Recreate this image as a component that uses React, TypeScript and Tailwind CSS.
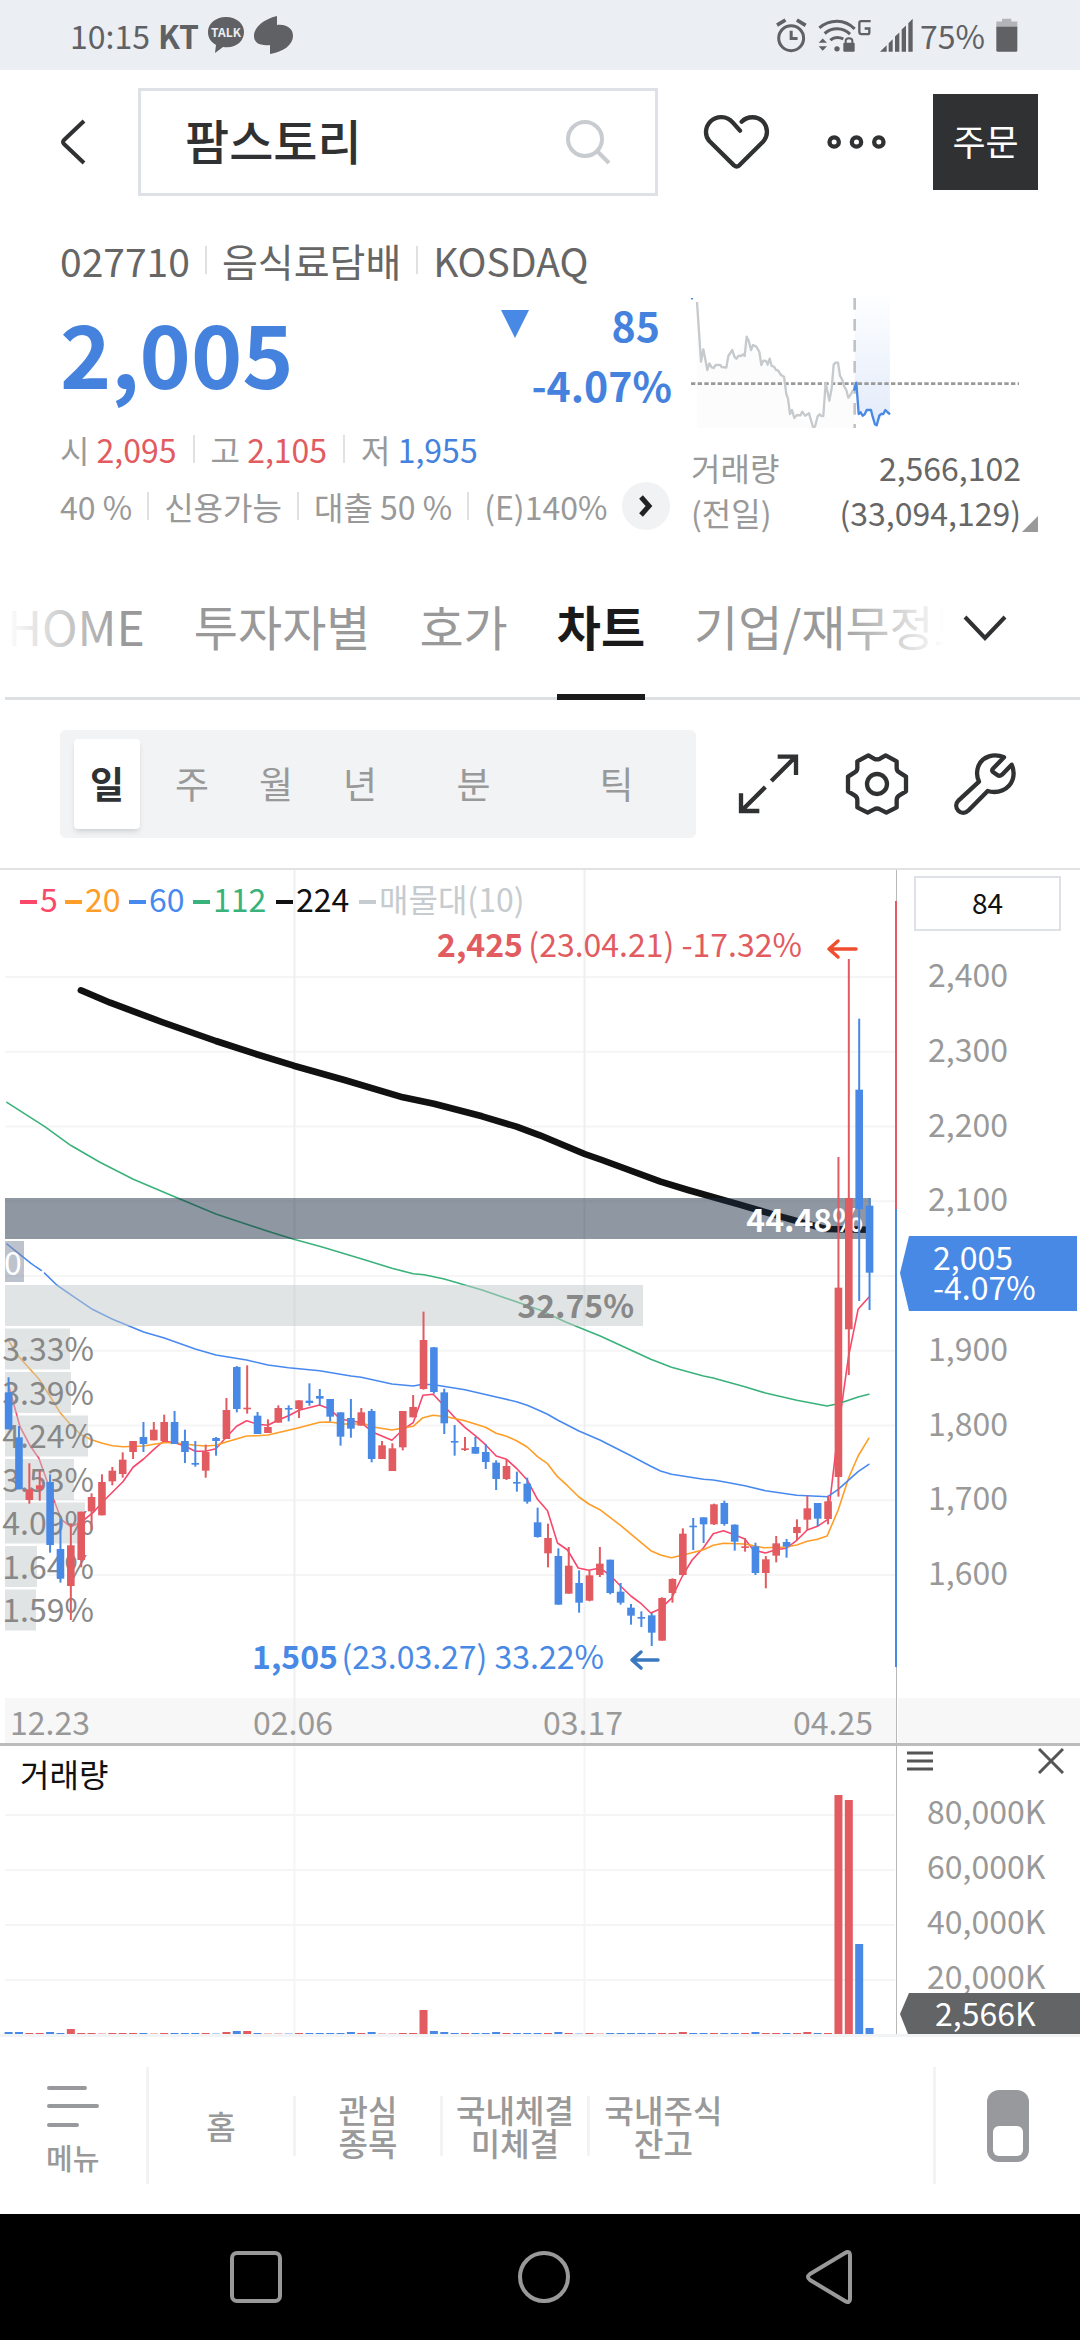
import React from "react";

/* ---------- chart data ---------- */

// Half a chart panel is 1568 units wide; prices are stored in thirds of a pixel below y = 1290.
const PANEL = 1568;
const px = (u: number) => u / 2.904;
const py = (u: number) => 1290 + u / 3;

type Candle = ["r" | "b", number, number, number, number]; // direction, high, body top, body bottom, low

const CANDLES: Candle[] = [
  ["b", 262, 307, 418, 418], ["b", 408, 442, 598, 598], ["r", 520, 598, 630, 641], ["r", 541, 586, 598, 632],
  ["b", 553, 576, 765, 788], ["b", 686, 777, 866, 878], ["r", 700, 766, 888, 990], ["r", 665, 665, 810, 832],
  ["r", 610, 621, 664, 720], ["r", 553, 576, 676, 676], ["r", 531, 542, 574, 586], ["r", 487, 509, 552, 563],
  ["r", 453, 453, 486, 507], ["b", 396, 441, 462, 486], ["r", 396, 419, 451, 451], ["r", 374, 396, 453, 453],
  ["b", 363, 396, 462, 462], ["b", 419, 453, 486, 519], ["b", 453, 519, 524, 530], ["r", 464, 486, 542, 563],
  ["b", 441, 444, 453, 497], ["r", 324, 360, 447, 447], ["b", 228, 231, 357, 367], ["r", 226, 353, 357, 371],
  ["b", 366, 377, 432, 432], ["r", 388, 411, 429, 429], ["r", 346, 354, 398, 398], ["b", 346, 354, 358, 394],
  ["r", 331, 331, 357, 384], ["b", 280, 332, 339, 347], ["b", 297, 318, 326, 346], ["b", 327, 327, 380, 394],
  ["b", 367, 367, 440, 467], ["b", 327, 384, 416, 443], ["r", 354, 367, 407, 407], ["b", 357, 363, 507, 517],
  ["r", 453, 466, 507, 507], ["r", 460, 475, 543, 543], ["r", 363, 363, 472, 481], ["r", 315, 351, 382, 382],
  ["r", 65, 150, 297, 299], ["b", 171, 172, 306, 311], ["b", 296, 307, 400, 432], ["b", 405, 453, 457, 497],
  ["r", 441, 475, 480, 483], ["b", 441, 471, 491, 491], ["b", 462, 486, 516, 537], ["b", 511, 518, 567, 600],
  ["r", 509, 528, 567, 570], ["b", 545, 576, 580, 605], ["b", 563, 581, 635, 641], ["b", 653, 697, 741, 743],
  ["r", 701, 744, 790, 832], ["b", 775, 798, 944, 944], ["r", 771, 827, 911, 911], ["b", 841, 879, 938, 968],
  ["r", 841, 856, 932, 934], ["r", 771, 821, 855, 861], ["b", 809, 809, 909, 913], ["b", 879, 905, 938, 944],
  ["b", 942, 953, 977, 1004], ["b", 964, 981, 986, 1011], ["b", 969, 976, 1028, 1068], ["r", 922, 924, 1052, 1052],
  ["r", 865, 867, 909, 938], ["r", 715, 731, 855, 857], ["b", 684, 707, 710, 780], ["b", 682, 682, 703, 759],
  ["r", 641, 643, 703, 705], ["b", 632, 639, 702, 707], ["b", 703, 704, 755, 782], ["r", 744, 769, 774, 785],
  ["b", 758, 769, 849, 855], ["r", 798, 808, 849, 895], ["r", 738, 760, 797, 817], ["b", 747, 756, 770, 803],
  ["r", 688, 711, 729, 751], ["r", 617, 655, 689, 720], ["b", 639, 639, 686, 708], ["r", 617, 634, 687, 703],
  ["r", -399, -7, 561, 620], ["r", -993, -276, 118, 255], ["b", -814, -601, -243, 33], ["b", -276, -253, -52, 60],
];

const candleX = (i: number) => 8.6 + i * 10.373;
const RED = "#e15b60";
const BLUE = "#4889e6";
const color = (d: string) => (d === "r" ? RED : BLUE);

// Moving averages: points of the left half, then points of the right half.
const MA5 = [
  [25, 285, 38, 335, 58, 410, 88, 468, 113, 505, 132, 560, 160, 640, 178, 688, 206, 711, 240, 693, 270, 668, 297, 637, 357, 575, 387, 531, 417, 507, 447, 478, 475, 453, 507, 458, 537, 468, 567, 484, 597, 484, 627, 476, 657, 442, 687, 409, 716, 392, 748, 403, 778, 406, 808, 390, 838, 377, 868, 361, 928, 345, 958, 357, 989, 388, 1019, 392, 1049, 398, 1070, 416, 1090, 430, 1138, 451, 1169, 420, 1200, 398, 1228, 316, 1258, 313, 1290, 348, 1320, 382, 1350, 412, 1380, 437, 1410, 464, 1441, 498, 1471, 508, 1500, 535, 1531, 570, 1561, 628],
  [22, 662, 51, 759, 80, 780, 111, 834, 142, 841, 174, 834, 204, 856, 234, 888, 264, 918, 294, 941, 322, 969, 350, 956, 382, 925, 415, 855, 442, 810, 475, 773, 503, 731, 533, 722, 565, 734, 595, 747, 620, 780, 655, 789, 685, 779, 715, 775, 746, 751, 776, 720, 806, 709, 836, 688, 866, 420, 896, 200, 924, 58, 955, 22],
];
const MA20 = [
  [25, 152, 55, 200, 113, 267, 146, 320, 176, 370, 206, 405, 236, 435, 266, 449, 297, 460, 327, 467, 357, 470, 417, 468, 447, 463, 477, 458, 507, 458, 567, 466, 597, 468, 627, 466, 657, 456, 716, 438, 748, 437, 778, 435, 828, 423, 868, 413, 928, 397, 958, 396, 1000, 402, 1060, 402, 1079, 410, 1138, 420, 1200, 409, 1228, 383, 1258, 376, 1300, 381, 1350, 392, 1410, 412, 1441, 430, 1471, 439, 1500, 452, 1531, 471, 1561, 500],
  [22, 521, 51, 560, 80, 587, 113, 621, 142, 642, 174, 659, 234, 706, 322, 782, 352, 796, 382, 803, 442, 788, 475, 779, 503, 766, 533, 760, 595, 762, 650, 773, 715, 771, 746, 765, 776, 754, 806, 748, 834, 738, 866, 660, 896, 565, 924, 498, 955, 445],
];
const MA60 = [
  [20, -138, 90, -80, 125, -55, 165, -15, 205, 14, 265, 56, 327, 88, 417, 126, 477, 144, 567, 177, 627, 195, 716, 210, 778, 225, 838, 233, 928, 242, 1019, 258, 1049, 262, 1138, 282, 1200, 288, 1228, 283, 1260, 284, 1350, 299, 1441, 321, 1500, 335, 1531, 346],
  [0, 362, 22, 373, 51, 390, 113, 423, 174, 450, 264, 497, 322, 529, 350, 543, 382, 553, 475, 568, 503, 570, 533, 575, 595, 587, 655, 602, 746, 616, 806, 619, 836, 620, 866, 598, 924, 545, 955, 523],
];
const MA112 = [
  [20, -563, 130, -490, 205, -434, 290, -383, 387, -332, 500, -283, 627, -228, 778, -176, 853, -152, 928, -131, 1049, -94, 1138, -65, 1200, -49, 1232, -46, 1290, -33, 1400, 0],
  [0, 60, 73, 95, 130, 119, 175, 138, 322, 208, 382, 232, 475, 258, 503, 264, 595, 290, 655, 309, 746, 331, 834, 348, 866, 341, 924, 321, 955, 313],
];
const MA224 = [
  [235, -899, 320, -862, 470, -804, 627, -747, 740, -709, 853, -673, 1000, -630, 1170, -578, 1260, -559, 1400, -521, 1500, -490],
  [0, -464, 130, -408, 180, -390, 350, -325, 430, -300, 580, -256, 700, -220, 830, -183, 957, -181],
];

function toPoints([left, right]: number[][]) {
  const out: string[] = [];
  [left, right].forEach((half, h) => {
    for (let i = 0; i < half.length; i += 2) {
      out.push(`${px(half[i] + h * PANEL).toFixed(1)},${py(half[i + 1]).toFixed(1)}`);
    }
  });
  return out.join(" ");
}

const PROFILE = [
  { w: 65, label: "3.33%" }, { w: 66, label: "3.39%" }, { w: 83, label: "4.24%" }, { w: 69, label: "3.53%" },
  { w: 80, label: "4.09%" }, { w: 32, label: "1.64%" }, { w: 31, label: "1.59%" },
];

const LEGEND = [
  { x: 20, label: "5", c: "#fb4868" }, { x: 65, label: "20", c: "#ff9d26" }, { x: 129, label: "60", c: "#4889f0" },
  { x: 193, label: "112", c: "#3ab27b" }, { x: 276, label: "224", c: "#111111" }, { x: 359, label: "매물대(10)", c: "#c5cbce" },
];

const PRICES = ["2,400", "2,300", "2,200", "2,100", "2,000", "1,900", "1,800", "1,700", "1,600"];
const priceY = (i: number) => 977 + i * 74.75;

// Heights of the volume bars.
const VOLUMES = [
  2, 2, 1, 1, 2, 1, 5, 1, 1, 0, 1, 1, 1, 1, 0, 1, 1, 1, 1, 1, 0, 2, 3, 3, 1, 0, 0, 0, 1, 1, 1, 1, 1, 2, 1, 2, 0, 0, 1, 1, 24,
  3, 2, 1, 1, 1, 1, 2, 1, 1, 1, 1, 1, 2, 1, 0, 1, 0, 1, 1, 1, 1, 1, 1, 1, 2, 1, 1, 1, 1, 1, 1, 2, 1, 1, 1, 1, 2, 1, 1,
  239, 234, 90, 6,
];

/* ---------- charts ---------- */

function Line({ data, c, w }: { data: number[][]; c: string; w: number }) {
  return <polyline points={toPoints(data)} fill="none" stroke={c} strokeWidth={w} strokeLinejoin="round" strokeLinecap="round" />;
}

function PriceChart() {
  return (
    <svg viewBox="0 870 897 873" className="block h-auto w-full text-[32px]" role="img" aria-label="일봉 차트">
      <rect x="5" y="1698" width="892" height="45" fill="#f7f7f7" />
      <g stroke="#f5f5f6" strokeWidth="2">
        {PRICES.map((p, i) => <line key={p} x1="5" x2="895" y1={priceY(i)} y2={priceY(i)} />)}
        <line x1="294.5" x2="294.5" y1="870" y2="1743" stroke="#efeff0" />
        <line x1="584.5" x2="584.5" y1="870" y2="1743" stroke="#efeff0" />
      </g>

      <Line data={MA5} c="#f8476b" w={1.6} />
      <Line data={MA20} c="#ff9d26" w={1.6} />
      <Line data={MA60} c="#4889f0" w={1.6} />
      <Line data={MA112} c="#3ab27b" w={1.6} />
      <Line data={MA224} c="#111111" w={6.6} />

      <rect x="5" y="1198" width="866" height="41" fill="#192b41" opacity=".49" />
      <rect x="5" y="1241" width="19" height="41" fill="#7a879c" opacity=".5" />
      <rect x="5" y="1285" width="638" height="41" fill="#c3c9c9" opacity=".5" />
      {PROFILE.map((b, i) => (
        <rect key={b.label} x="5" y={1328.5 + i * 43.5} width={b.w} height="41" fill="#c3c9c9" opacity=".5" />
      ))}
      <text x="863" y="1232" textAnchor="end" fill="#fff" className="font-bold">44.48%</text>
      <text x="4" y="1275" fill="#fff">0.96%</text>
      <text x="634" y="1318" textAnchor="end" fill="#888" className="font-bold">32.75%</text>
      {PROFILE.map((b, i) => (
        <text key={b.label} x="94" y={1361 + i * 43.5} textAnchor="end" fill="#888">{b.label}</text>
      ))}

      {CANDLES.map(([d, hi, top, bot, lo], i) => (
        <g key={i} fill={color(d)}>
          <rect x={candleX(i) - 1} y={py(hi)} width="2" height={(lo - hi) / 3} />
          <rect x={candleX(i) - 3.8} y={py(top)} width="7.6" height={Math.max(1.6, (bot - top) / 3)} />
        </g>
      ))}

      {LEGEND.map((l) => (
        <g key={l.label} fill={l.c}>
          <rect x={l.x} y="900" width="17" height="4" />
          <text x={l.x + 20} y="912">{l.label}</text>
        </g>
      ))}

      <text x="437" y="957" fill={RED} className="font-bold">2,425</text>
      <text x="802" y="957" textAnchor="end" fill={RED}>(23.04.21) -17.32%</text>
      <path d="M856 949H829M838 941L829 949L838 957" fill="none" stroke="#f04f2f" strokeWidth="3.5" strokeLinecap="round" strokeLinejoin="round" />
      <text x="252" y="1669" fill={BLUE} className="font-bold">1,505</text>
      <text x="604" y="1669" textAnchor="end" fill={BLUE}>(23.03.27) 33.22%</text>
      <path d="M658 1660H632M641 1652L632 1660L641 1668" fill="none" stroke="#3a78c0" strokeWidth="3.5" strokeLinecap="round" strokeLinejoin="round" />

      <g fill="#999">
        <text x="10" y="1735">12.23</text>
        <text x="293" y="1735" textAnchor="middle">02.06</text>
        <text x="583" y="1735" textAnchor="middle">03.17</text>
        <text x="873" y="1735" textAnchor="end">04.25</text>
      </g>
      <rect x="896" y="870" width="2" height="873" fill="#b8b8b8" />
      <rect x="895" y="901" width="2" height="308" fill={RED} />
      <rect x="895" y="1209" width="2" height="458" fill={BLUE} />
    </svg>
  );
}

function PriceAxis() {
  return (
    <svg viewBox="897 931 183 812" className="block h-auto w-full text-[32px]" role="img" aria-label="가격 축">
      <rect x="898" y="1698" width="182" height="45" fill="#f7f7f7" />
      {PRICES.map((p, i) => p !== "2,000" && (
        <text key={p} x="928" y={priceY(i) + 10} fill="#999">{p}</text>
      ))}
      <path d="M900 1273L909 1236H1077V1311H909Z" fill={BLUE} />
      <text x="933" y="1270" fill="#fff">2,005</text>
      <text x="933" y="1300" fill="#fff">-4.07%</text>
    </svg>
  );
}

function VolumeChart() {
  return (
    <svg viewBox="0 1746 897 288" className="block h-auto w-full text-[32px]" role="img" aria-label="거래량 차트">
      <g stroke="#f5f5f6" strokeWidth="2">
        {[1815, 1870, 1925, 1980].map((y) => <line key={y} x1="5" x2="895" y1={y} y2={y} />)}
        <line x1="294.5" x2="294.5" y1="1746" y2="2034" />
        <line x1="584.5" x2="584.5" y1="1746" y2="2034" />
      </g>
      {VOLUMES.map((v, i) => (
        <rect key={i} x={candleX(i) - 4} y={2034 - Math.max(v, 0.4)} width="8" height={Math.max(v, 0.4)} fill={color(CANDLES[i][0])} />
      ))}
      <text x="20" y="1787" fill="#111">거래량</text>
      <rect x="896" y="1746" width="2" height="288" fill="#b8b8b8" />
    </svg>
  );
}

function VolumeAxis() {
  return (
    <svg viewBox="897 1780 183 254" className="block h-auto w-full text-[32px]" role="img" aria-label="거래량 축">
      {["80,000K", "60,000K", "40,000K", "20,000K"].map((v, i) => (
        <text key={v} x="927" y={1824 + i * 55} fill="#999">{v}</text>
      ))}
      <path d="M900 2014L909 1993H1080V2034H908Z" fill="#636466" />
      <text x="935" y="2026" fill="#fff">2,566K</text>
    </svg>
  );
}

function MiniChart() {
  return (
    <svg viewBox="30 624 984 390" className="block h-[130px] w-[328px]" role="img" aria-label="당일 시세">
      <defs>
        <linearGradient id="today" x1="0" x2="0" y1="0" y2="1">
          <stop offset="0" stopColor="#fdfeff" />
          <stop offset="1" stopColor="#e3ebfa" />
        </linearGradient>
      </defs>
      <path d="M48 640L60 812 80 836 140 830 160 800 197 740 240 820 270 825 310 860 330 970 400 1010 430 975 450 900 468 820 500 920 521 880V1014H48Z" fill="#fcfcfd" />
      <path d="M521 624H627V970L612 962 587 1003 570 960 533 970 521 880Z" fill="url(#today)" />
      <path d="M30 626H36" stroke={BLUE} strokeWidth="5" />
      <path d="M30 881H1014" stroke="#999" strokeWidth="8" strokeDasharray="13 7" />
      <path d="M521 624V1014" stroke="#bfc4c8" strokeWidth="8" strokeDasharray="35 28" />
      <path d="M48 636L60 815 67 778 79 840 85 820 92 832 98 834 104 825 118 825 122 831 136 833 142 798 154 780 160 800 166 806 173 797 180 798 186 793 191 798 197 740 203 752 210 780 216 765 226 770 235 786 241 825 247 812 255 813 260 824 266 806 272 828 279 830 285 840 291 841 300 855 309 860 316 912 321 926 327 972 333 960 340 984 348 975 358 976 364 965 372 977 384 970 396 1011 402 1010 410 979 416 973 421 978 427 978 434 878 445 932 452 895 458 824 464 818 471 818 477 857 484 870 489 888 496 900 502 923 508 916 515 902 521 900" fill="none" stroke="#c6cacd" strokeWidth="7" strokeLinejoin="round" />
      <path d="M519 902L526 878 533 972 539 967 545 977 551 973 557 960 570 960 575 980 582 1003 587 1006 595 977 600 972 607 972 613 960 619 966 627 973" fill="none" stroke={BLUE} strokeWidth="7" strokeLinejoin="round" />
    </svg>
  );
}

/* ---------- icons ---------- */

const INK = "#2f3133";

function AlarmIcon() {
  return (
    <svg viewBox="28 28 92 104" className="h-[35px] w-[31px]" fill="none" stroke="#5f6164">
      <circle cx="73" cy="88" r="37" strokeWidth="9" />
      <path d="M73 66V89H92" strokeWidth="9" />
      <path d="M31 49L56 34M90 34L116 50" strokeWidth="11" />
    </svg>
  );
}

function WifiIcon() {
  return (
    <svg viewBox="160 28 162 104" className="ml-1 h-[35px] w-[54px]" fill="none" stroke="#5f6164">
      <path d="M164 57C196 30 240 30 270 60" strokeWidth="9" />
      <path d="M180 74C202 55 234 55 256 76" strokeWidth="9" />
      <path d="M197 94C208 84 222 84 236 90" strokeWidth="9" />
      <circle cx="217" cy="120" r="8" fill="#5f6164" stroke="none" />
      <path d="M162 102L174 89 187 102ZM162 112H187L174 126Z" fill="#5f6164" stroke="none" />
      <rect x="236" y="102" width="34" height="27" rx="3" fill="#5f6164" stroke="none" />
      <path d="M243 103V96C243 86 263 86 263 96V103" strokeWidth="6" />
      <path d="M318 37H290Q284 37 284 43V69Q284 76 291 76H308Q314 76 314 70V59H300" strokeWidth="7" />
    </svg>
  );
}

function SignalIcon() {
  return (
    <svg viewBox="340 28 102 104" className="h-[35px] w-[34px]" fill="#5f6164">
      <path d="M343 129L363 109V129ZM369 103L381 91V129H369ZM388 83L401 71V129H388ZM408 62L421 50V129H408ZM428 43L441 30V129H428Z" />
    </svg>
  );
}

function BatteryIcon() {
  return (
    <svg viewBox="692 28 66 104" className="ml-1 h-[35px] w-[22px]">
      <path d="M693 38H710V30H738V38H756V56H693Z" fill="#b2b4b7" />
      <path d="M693 54H756V124Q756 129 751 129H698Q693 129 693 124Z" fill="#5f6164" />
    </svg>
  );
}

function HeartIcon() {
  return (
    <svg viewBox="62 66 207 174" className="h-[58px] w-[69px]" fill="none" stroke={INK} strokeWidth="13" strokeLinecap="round" strokeLinejoin="round">
      <path d="M176 119L154 94C137 74 106 73 88 91C70 109 70 134 84 150L158 223Q166 230 174 223L245 152C261 135 261 109 244 91C228 75 199 74 181 92" />
    </svg>
  );
}

function MoreIcon() {
  return (
    <svg viewBox="436 130 182 48" className="h-4 w-[61px]" fill="none" stroke={INK} strokeWidth="13">
      <circle cx="460" cy="154" r="14" />
      <circle cx="527" cy="154" r="14" />
      <circle cx="594" cy="154" r="14" />
    </svg>
  );
}

function ExpandIcon() {
  return (
    <svg viewBox="140 36 192 192" className="size-16" fill="none" stroke={INK} strokeWidth="13">
      <path d="M243 123L314 52M262 50H317V105M225 141L155 211M152 160V213H207" />
    </svg>
  );
}

function GearIcon() {
  return (
    <svg viewBox="462 36 192 192" className="size-16" fill="none" stroke={INK} strokeWidth="13" strokeLinejoin="round">
      <path d="M532 46L549 56Q558 60 567 56L584 46L617 64V84Q617 93 625 97L645 110V154L625 166Q617 171 617 180V202L586 218L567 208Q558 203 549 208L530 218L499 202V180Q499 171 491 166L471 154V110L491 97Q499 93 499 84V64Z" />
      <circle cx="558" cy="132" r="30" />
    </svg>
  );
}

function WrenchIcon() {
  return (
    <svg viewBox="788 36 192 192" className="size-16" fill="none" stroke={INK} strokeWidth="13" strokeLinejoin="round">
      <path d="M941 52C912 39 876 48 864 79C858 95 860 112 866 125L805 181C796 190 795 203 804 212C813 221 826 220 835 211L892 153C922 162 957 149 967 118C972 102 970 87 964 74L935 104Q928 110 921 105L908 96Q903 91 909 85Z" />
    </svg>
  );
}

/* ---------- page ---------- */

function Sep() {
  return <span className="h-7 w-0.5 shrink-0 bg-[#dfe2e5]" />;
}

function StatusBar() {
  return (
    <div className="flex h-[70px] items-center justify-between bg-[#ebeef3] pr-[62px] pl-[70px] text-[32px] text-[#5f6164]">
      <div className="flex items-center gap-2">
        <span>10:15</span>
        <span className="font-bold">KT</span>
        <svg viewBox="0 0 38 36" className="h-9 w-[38px]" fill="#5f6164">
          <path d="M19 0C8 0 1 7 1 15C1 21 4 25 9 28L8 36L16 30C29 32 37 24 37 15C37 7 30 0 19 0Z" />
          <text x="19" y="20" textAnchor="middle" fill="#ebeef3" className="text-[12px] font-bold">TALK</text>
        </svg>
        <svg viewBox="0 0 40 38" className="h-[38px] w-10" fill="#5f6164">
          <path d="M24 0V9C33 8 40 12 40 20C40 29 30 36 17 38V29C7 30 1 27 1 20C1 11 11 3 24 0Z" />
        </svg>
      </div>
      <div className="flex items-center gap-[7px]">
        <AlarmIcon />
        <WifiIcon />
        <SignalIcon />
        <span>75%</span>
        <BatteryIcon />
      </div>
    </div>
  );
}

function Header() {
  return (
    <header className="flex h-36 items-center pr-[42px] pl-[60px]">
      <button aria-label="뒤로" className="w-[78px]">
        <svg viewBox="0 0 26 46" className="h-[46px] w-[26px]" fill="none" stroke={INK} strokeWidth="4">
          <path d="M24 2L4 21Q2 23 4 25L24 44" />
        </svg>
      </button>
      <label className="flex h-[108px] min-w-0 flex-1 items-center border-3 border-[#dee2e6] pr-[44px] pl-[44px]">
        <input aria-label="종목 검색" defaultValue="팜스토리" className="w-full min-w-0 bg-transparent pb-[6px] text-[48px] font-medium text-[#2f3133] outline-none" />
        <svg viewBox="0 0 46 46" className="size-[46px] shrink-0" fill="none" stroke="#c8ccd0" strokeWidth="4">
          <circle cx="20" cy="20" r="17" />
          <path d="M32 32L44 44" />
        </svg>
      </label>
      <button aria-label="관심종목" className="ml-11"><HeartIcon /></button>
      <button aria-label="더보기" className="ml-[55px]"><MoreIcon /></button>
      <button className="ml-[46px] h-24 w-[105px] bg-[#2f3133] pb-1 text-[36px] text-white">주문</button>
    </header>
  );
}

function Quote() {
  return (
    <section className="pt-[26px] pr-[42px] pl-[60px] text-[32px] leading-none">
      <div className="flex h-10 items-center gap-[15px] text-[39px] text-[#666]">
        <span>027710</span><Sep /><span>음식료담배</span><Sep /><span>KOSDAQ</span>
      </div>
      <div className="flex">
        <div className="min-w-0 flex-1">
          <div className="flex h-[142px] items-center justify-between text-[#4482dd]">
            <strong className="text-[87px] font-bold">2,005</strong>
            <div className="flex items-start gap-[2px] pt-[6px] pr-[3px] text-[41px] leading-[60px] font-bold">
              <svg viewBox="0 0 28 28" className="mt-4 size-7" fill="#4889e6"><path d="M0 0H28L14 28Z" /></svg>
              <div className="flex flex-col items-end">
                <span className="pr-3">85</span>
                <span>-4.07%</span>
              </div>
            </div>
          </div>
          <div className="flex h-[54px] items-center gap-4 text-[#999]">
            <span>시 <span className="text-[#e15b60]">2,095</span></span><Sep />
            <span>고 <span className="text-[#e15b60]">2,105</span></span><Sep />
            <span>저 <span className="text-[#4482dd]">1,955</span></span>
          </div>
          <div className="flex h-[60px] items-center gap-[15px] whitespace-nowrap text-[#999]">
            <span>40 %</span><Sep /><span>신용가능</span><Sep /><span>대출 50 %</span><Sep /><span>(E)140%</span>
            <button aria-label="더 보기" className="grid size-12 shrink-0 place-items-center rounded-full bg-[#f1f2f4]">
              <svg viewBox="0 0 14 22" className="h-[22px] w-[14px]" fill="none" stroke="#222" strokeWidth="5"><path d="M2 2L10 11L2 20" /></svg>
            </button>
          </div>
        </div>
        <div className="ml-4 w-[347px] pt-[18px] text-[#666]">
          <MiniChart />
          <div className="mt-4 flex h-[45px] items-center justify-between pr-[17px]">
            <span className="text-[#999]">거래량</span><span>2,566,102</span>
          </div>
          <div className="flex h-[45px] items-center justify-between">
            <span className="text-[#999]">(전일)</span>
            <span className="flex items-end">
              (33,094,129)
              <svg viewBox="0 0 16 16" className="ml-px size-4 translate-y-1" fill="#999"><path d="M16 0V16H0Z" /></svg>
            </span>
          </div>
        </div>
      </div>
    </section>
  );
}

function Tabs() {
  return (
    <nav className="relative mt-7 ml-[5px] flex h-[136px] border-b-3 border-[#dde0e3] text-[48px] text-[#999]">
      <div className="-mb-[3px] flex min-w-0 flex-1 gap-[49px] overflow-hidden pl-0.5 whitespace-nowrap">
        {["HOME", "투자자별", "호가", "차트", "기업/재무정보"].map((t) =>
          t === "차트" ? (
            <button key={t} aria-current="page" className="shrink-0 border-b-6 border-[#1a1a1a] pb-2 font-bold text-[#1a1a1a]">{t}</button>
          ) : (
            <button key={t} className="shrink-0 pb-[14px]">{t}</button>
          ),
        )}
      </div>
      <div className="w-[135px] shrink-0 pl-[18px]">
        <button aria-label="탭 펼치기" className="grid h-full place-items-center pb-[6px]">
          <svg viewBox="0 0 44 26" className="h-[26px] w-11" fill="none" stroke={INK} strokeWidth="4"><path d="M2 2L22 23L42 2" /></svg>
        </button>
      </div>
      <div className="pointer-events-none absolute top-0 left-0 h-28 w-[120px] bg-linear-to-r from-white to-transparent" />
      <div className="pointer-events-none absolute top-0 right-[135px] h-28 w-[110px] bg-linear-to-l from-white to-transparent" />
    </nav>
  );
}

function PeriodBar() {
  return (
    <section className="flex items-center justify-between py-[30px] pr-[63px] pl-[60px]">
      <div className="flex h-[108px] w-[636px] rounded-md bg-[#f1f3f5] py-[9px] pl-[14px] text-[37px] text-[#999]">
        <button aria-pressed="true" className="w-[66px] rounded-sm bg-white font-bold text-[#2f3133] shadow-md">일</button>
        <button className="ml-[10px] w-[84px]">주</button>
        <button className="w-[84px]">월</button>
        <button className="w-[84px]">년</button>
        <button className="w-[143px]">분</button>
        <button className="w-[143px]">틱</button>
      </div>
      <div className="flex gap-11">
        <button aria-label="전체 화면"><ExpandIcon /></button>
        <button aria-label="설정"><GearIcon /></button>
        <button aria-label="도구"><WrenchIcon /></button>
      </div>
    </section>
  );
}

function Charts() {
  return (
    <main>
      <div className="grid grid-cols-[897fr_183fr] border-t-2 border-b-3 border-t-[#e0e2e4] border-b-[#bbbcbd]">
        <PriceChart />
        <div className="pt-[6px]">
          <div className="pr-[19px] pl-[17px]">
            <input aria-label="봉 개수" defaultValue="84" className="block h-[55px] w-full border-2 border-[#dee2e6] pb-1 text-center text-[28px] text-[#111] outline-none" />
          </div>
          <PriceAxis />
        </div>
      </div>
      <div className="grid grid-cols-[897fr_183fr] border-b-3 border-[#f1f3f5]">
        <VolumeChart />
        <div>
          <div className="flex h-[34px] items-center justify-between pr-4 pb-1 pl-[10px]">
            <button aria-label="지표 메뉴">
              <svg viewBox="0 0 26 22" className="block h-[22px] w-[26px]" stroke="#555" strokeWidth="3"><path d="M0 3H26M0 11H26M0 19H26" /></svg>
            </button>
            <button aria-label="닫기">
              <svg viewBox="0 0 26 26" className="block size-[26px]" stroke="#555" strokeWidth="3"><path d="M1 1L25 25M25 1L1 25" /></svg>
            </button>
          </div>
          <VolumeAxis />
        </div>
      </div>
    </main>
  );
}

function BottomBar() {
  return (
    <footer className="flex h-[177px] items-center text-[32px] leading-[33px] font-medium text-[#999]">
      <button className="flex h-[117px] w-[149px] flex-col items-start border-r-3 border-[#f1f3f5] pt-[19px] pl-[46px] text-[29px]">
        <svg viewBox="0 0 54 42" className="h-[42px] w-[54px]" stroke="#98999d" strokeWidth="4" strokeLinecap="round"><path d="M3 2H39M3 20H51M3 39H31" /></svg>
        <span className="mt-[13px]">메뉴</span>
      </button>
      <button className="h-[60px] w-[147px] border-r-3 border-[#f1f3f5]">홈</button>
      <button className="flex h-[60px] w-[147px] flex-col items-center justify-center border-r-3 border-[#f1f3f5]"><span>관심</span><span>종목</span></button>
      <button className="flex h-[60px] w-[147px] flex-col items-center justify-center border-r-3 border-[#f1f3f5]"><span>국내체결</span><span>미체결</span></button>
      <button className="flex h-[60px] w-[147px] flex-col items-center justify-center"><span>국내주식</span><span>잔고</span></button>
      <div className="ml-auto grid h-[117px] w-[147px] place-items-center border-l-3 border-[#f1f3f5]">
        <button role="switch" aria-checked="false" aria-label="화면 전환" className="flex h-18 w-[42px] items-end rounded-xl bg-[#98999d] p-[6px]">
          <span className="h-[30px] w-full rounded-md bg-white" />
        </button>
      </div>
    </footer>
  );
}

function SystemNav() {
  return (
    <div className="flex h-[126px] items-center justify-between bg-black pr-[225px] pl-[229px]">
      <button aria-label="최근 앱">
        <svg viewBox="0 0 54 54" className="size-[54px]" fill="none" stroke="#999" strokeWidth="4"><rect x="3" y="3" width="48" height="48" rx="5" /></svg>
      </button>
      <button aria-label="홈">
        <svg viewBox="0 0 54 54" className="size-[54px]" fill="none" stroke="#999" strokeWidth="4"><circle cx="27" cy="27" r="24" /></svg>
      </button>
      <button aria-label="뒤로 가기">
        <svg viewBox="0 0 50 54" className="h-[54px] w-[50px]" fill="none" stroke="#999" strokeWidth="4" strokeLinejoin="round"><path d="M40 3Q45 0 45 6V48Q45 54 40 51L5 30Q1 27 5 24Z" /></svg>
      </button>
    </div>
  );
}

export default function App() {
  return (
    <div className="min-h-screen w-full bg-white font-['Noto_Sans_CJK_KR',sans-serif]">
      <StatusBar />
      <Header />
      <Quote />
      <Tabs />
      <PeriodBar />
      <Charts />
      <BottomBar />
      <SystemNav />
    </div>
  );
}
